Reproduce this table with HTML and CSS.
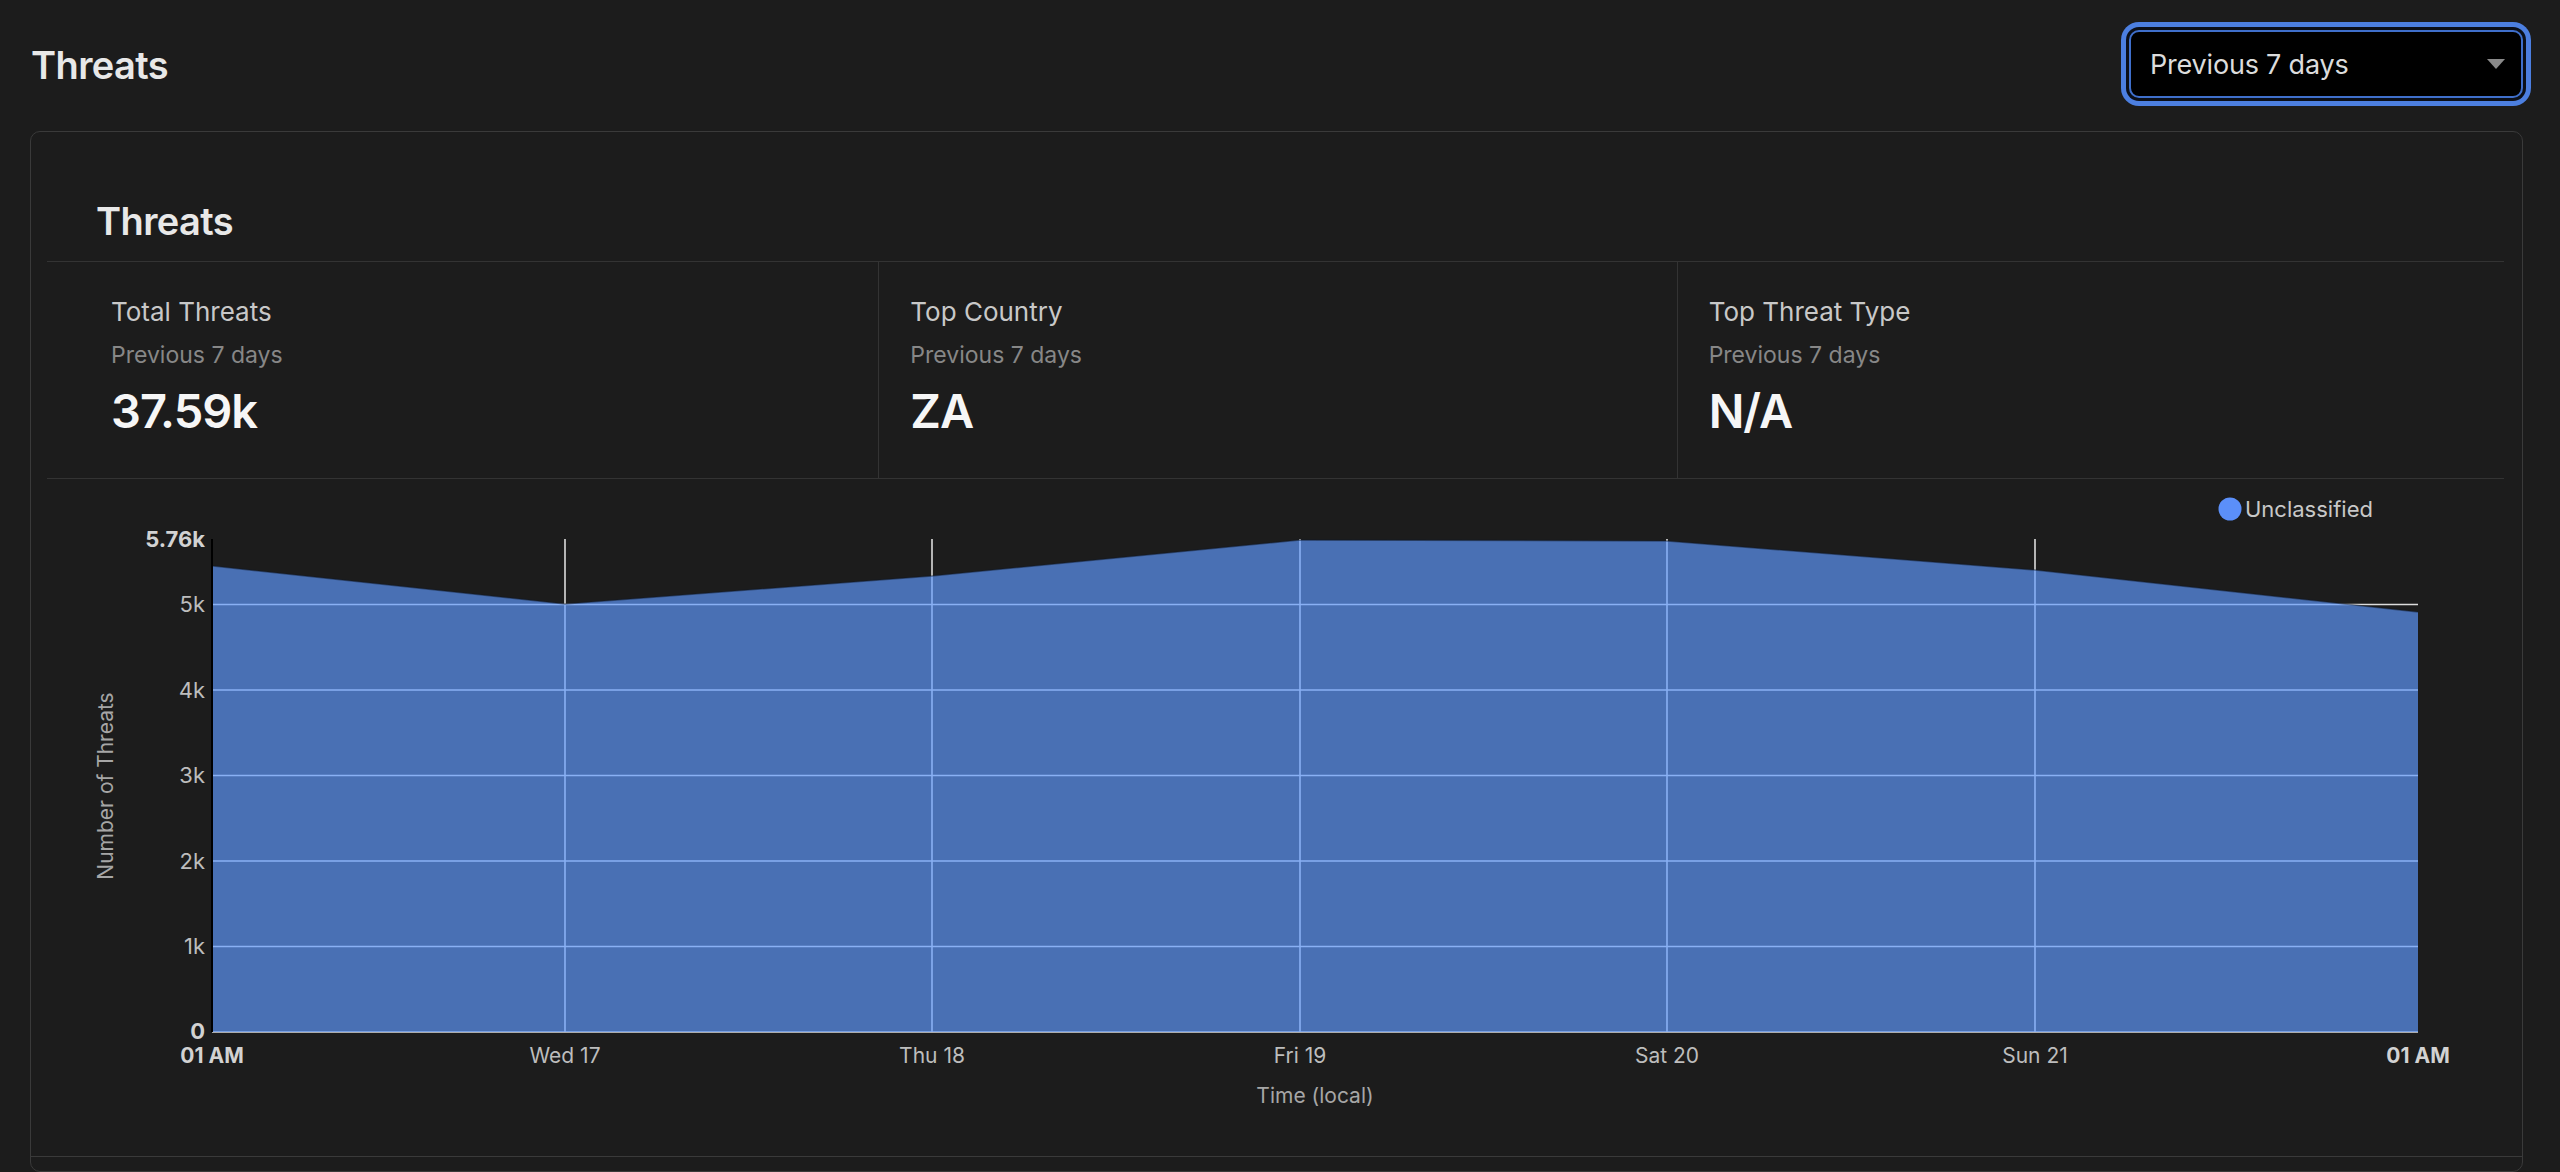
FILE: index.html
```html
<!DOCTYPE html>
<html lang="en">
<head>
<meta charset="utf-8">
<title>Threats</title>
<link rel="stylesheet" href="styles.css">
</head>
<body>
<div class="page">
  <header class="page-header">
    <h1 class="page-title">Threats</h1>
    <div class="select" role="combobox" aria-expanded="false">
      <span class="select-value">Previous 7 days</span>
      <span class="select-arrow"></span>
    </div>
  </header>

  <section class="card">
    <div class="card-header">
      <h2 class="card-title">Threats</h2>
    </div>

    <div class="stats">
      <div class="stat">
        <div class="stat-label">Total Threats</div>
        <div class="stat-sub">Previous 7 days</div>
        <div class="stat-value">37.59k</div>
      </div>
      <div class="stat">
        <div class="stat-label">Top Country</div>
        <div class="stat-sub">Previous 7 days</div>
        <div class="stat-value">ZA</div>
      </div>
      <div class="stat">
        <div class="stat-label">Top Threat Type</div>
        <div class="stat-sub">Previous 7 days</div>
        <div class="stat-value">N/A</div>
      </div>
    </div>

    <div class="chart">
      <svg class="chart-svg" width="2456" height="677" viewBox="47 479 2456 677" xmlns="http://www.w3.org/2000/svg">
        <circle cx="2230" cy="509" r="11.5" fill="#5b8ff9"/>
        <text class="legend-text" x="2245" y="517">Unclassified</text>

        <g class="grid">
          <line x1="212" y1="1032" x2="2418" y2="1032"/>
          <line x1="212" y1="946.5" x2="2418" y2="946.5"/>
          <line x1="212" y1="861" x2="2418" y2="861"/>
          <line x1="212" y1="775.5" x2="2418" y2="775.5"/>
          <line x1="212" y1="690" x2="2418" y2="690"/>
          <line x1="212" y1="604.5" x2="2418" y2="604.5"/>
          <line x1="565" y1="539" x2="565" y2="1032"/>
          <line x1="932" y1="539" x2="932" y2="1032"/>
          <line x1="1300" y1="539" x2="1300" y2="1032"/>
          <line x1="1667" y1="539" x2="1667" y2="1032"/>
          <line x1="2035" y1="539" x2="2035" y2="1032"/>
        </g>

        <path class="area" d="M213 566 L565 604 L932 576 L1300 540 L1667 541 L2035 570 L2418 612 L2418 1032 L213 1032 Z"/>
        <polyline class="area-edge" points="213,566 565,604 932,576 1300,540 1667,541 2035,570 2418,612"/>

        <line class="y-axis" x1="212" y1="539" x2="212" y2="1032"/>

        <g class="tick-y">
          <text class="tick-strong" x="205" y="547">5.76k</text>
          <text x="205" y="612">5k</text>
          <text x="205" y="697.5">4k</text>
          <text x="205" y="783">3k</text>
          <text x="205" y="868.5">2k</text>
          <text x="205" y="954">1k</text>
          <text class="tick-strong" x="205" y="1039">0</text>
        </g>

        <g class="tick-x">
          <text class="tick-strong" x="212" y="1063">01 AM</text>
          <text x="565" y="1063">Wed 17</text>
          <text x="932" y="1063">Thu 18</text>
          <text x="1300" y="1063">Fri 19</text>
          <text x="1667" y="1063">Sat 20</text>
          <text x="2035" y="1063">Sun 21</text>
          <text class="tick-strong" x="2418" y="1063">01 AM</text>
        </g>

        <text class="axis-title" x="1315" y="1103">Time (local)</text>
        <text class="axis-title" x="0" y="0" transform="translate(113 786) rotate(-90)">Number of Threats</text>
      </svg>
    </div>

    <div class="card-footer"></div>
  </section>
</div>
</body>
</html>
```

FILE: styles.css
```css
* {
  box-sizing: border-box;
}

html, body {
  margin: 0;
  padding: 0;
  background: #1c1c1c;
  overflow: hidden;
}

body {
  font-family: Inter, "Noto Sans", "DejaVu Sans", sans-serif;
  color: #e6e6e6;
}

.page {
  padding: 30px 37px 0 30px;
}

.page-header {
  display: flex;
  align-items: center;
  justify-content: space-between;
  height: 68px;
  margin-bottom: 33px;
}

.page-title {
  margin: 0;
  padding-left: 1px;
  padding-top: 2px;
  font-size: 38px;
  line-height: 48px;
  font-weight: 600;
  color: #e8e8e8;
  letter-spacing: -0.6px;
}

.select {
  width: 394px;
  height: 68px;
  display: flex;
  align-items: center;
  justify-content: space-between;
  padding: 0 16px 0 19px;
  background: #000;
  border: 2px solid #3f6fcb;
  border-radius: 10px;
  box-shadow: 0 0 0 3px #0b0f18, 0 0 0 8px #4c7fe0;
}

.select-value {
  padding-top: 2px;
  font-size: 27px;
  line-height: 34px;
  color: #dcdcdc;
  letter-spacing: -0.2px;
}

.select-arrow {
  width: 0;
  height: 0;
  border-left: 9.5px solid transparent;
  border-right: 9.5px solid transparent;
  border-top: 10px solid #8a8a8a;
}

.card {
  border: 1px solid #3a3a3a;
  border-radius: 10px;
  background: #1c1c1c;
}

.card-header {
  margin: 0 18px 0 16px;
  padding: 65px 0 16px 49px;
  border-bottom: 1px solid #333;
}

.card-title {
  margin: 0;
  font-size: 38px;
  line-height: 48px;
  font-weight: 600;
  color: #e8e8e8;
  letter-spacing: -0.6px;
}

.stats {
  margin: 0 18px 0 16px;
  padding: 0 29px 0 33px;
  display: grid;
  grid-template-columns: repeat(3, 1fr);
  border-bottom: 1px solid #333;
}

.stat {
  padding: 34px 0 39px 31px;
}

.stat + .stat {
  border-left: 1px solid #333;
}

.stat-label {
  font-size: 26px;
  line-height: 32px;
  color: #c8c8c8;
}

.stat-sub {
  margin-top: 13px;
  font-size: 23px;
  line-height: 28px;
  color: #878787;
}

.stat-value {
  margin-top: 14px;
  font-size: 47px;
  line-height: 56px;
  font-weight: 600;
  color: #f6f6f6;
  letter-spacing: -1px;
}

.chart {
  margin: 0 18px 0 16px;
  height: 677px;
}

.chart-svg {
  display: block;
  font-family: Inter, "Noto Sans", "DejaVu Sans", sans-serif;
}

.legend-text {
  font-size: 22px;
  fill: #c8c8c8;
}

.grid line {
  stroke: #dcdcdc;
  stroke-width: 1.6;
}

.area {
  fill: #609aff;
  fill-opacity: 0.67;
}

.area-edge {
  fill: none;
  stroke: #101828;
  stroke-opacity: 0.45;
  stroke-width: 1.5;
}

.y-axis {
  stroke: #000;
  stroke-width: 2;
}

.tick-y text {
  font-size: 22px;
  fill: #bdbdbd;
  text-anchor: end;
}

.tick-x text {
  font-size: 21px;
  fill: #bdbdbd;
  text-anchor: middle;
}

.tick-y .tick-strong,
.tick-x .tick-strong {
  font-weight: 700;
  fill: #d2d2d2;
}

.axis-title {
  font-size: 21px;
  fill: #a6a6a6;
  text-anchor: middle;
}

.card-footer {
  border-top: 1px solid #3a3a3a;
  height: 15px;
}
```
